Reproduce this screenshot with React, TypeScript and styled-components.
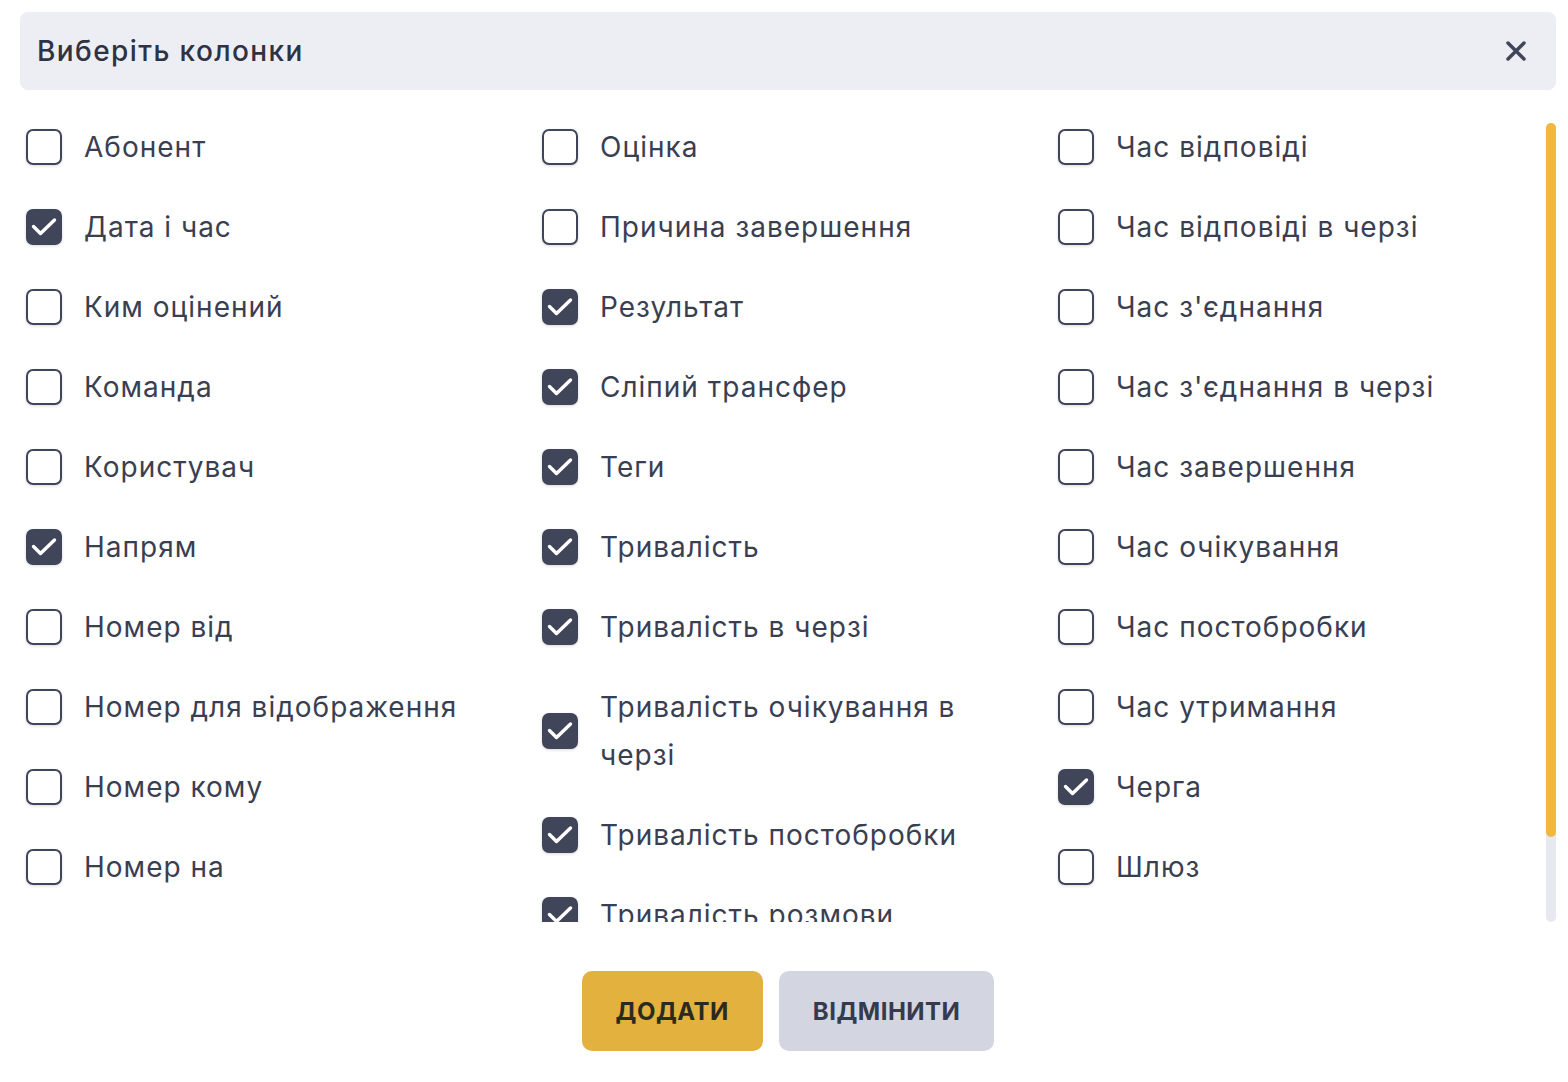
import React from 'react';
import styled, { createGlobalStyle } from 'styled-components';

const GlobalStyle = createGlobalStyle`
  html, body {
    margin: 0;
    padding: 0;
    background: #ffffff;
  }
  body {
    font-family: Inter, "Noto Sans", "Liberation Sans", sans-serif;
    color: #3a3e51;
  }
  * {
    box-sizing: border-box;
  }
`;

type Column = { label: string; checked: boolean }[];

const columns: Column[] = [
  [
    { label: 'Абонент', checked: false },
    { label: 'Дата і час', checked: true },
    { label: 'Ким оцінений', checked: false },
    { label: 'Команда', checked: false },
    { label: 'Користувач', checked: false },
    { label: 'Напрям', checked: true },
    { label: 'Номер від', checked: false },
    { label: 'Номер для відображення', checked: false },
    { label: 'Номер кому', checked: false },
    { label: 'Номер на', checked: false },
  ],
  [
    { label: 'Оцінка', checked: false },
    { label: 'Причина завершення', checked: false },
    { label: 'Результат', checked: true },
    { label: 'Сліпий трансфер', checked: true },
    { label: 'Теги', checked: true },
    { label: 'Тривалість', checked: true },
    { label: 'Тривалість в черзі', checked: true },
    { label: 'Тривалість очікування в черзі', checked: true },
    { label: 'Тривалість постобробки', checked: true },
    { label: 'Тривалість розмови', checked: true },
  ],
  [
    { label: 'Час відповіді', checked: false },
    { label: 'Час відповіді в черзі', checked: false },
    { label: "Час з'єднання", checked: false },
    { label: "Час з'єднання в черзі", checked: false },
    { label: 'Час завершення', checked: false },
    { label: 'Час очікування', checked: false },
    { label: 'Час постобробки', checked: false },
    { label: 'Час утримання', checked: false },
    { label: 'Черга', checked: true },
    { label: 'Шлюз', checked: false },
  ],
];

const Page = styled.div`
  width: 1568px;
  height: 1082px;
  padding: 12px 12px 0 20px;
  display: flex;
  flex-direction: column;
`;

const Header = styled.div`
  height: 78px;
  background: #edeef3;
  border-radius: 8px;
  display: flex;
  align-items: center;
  justify-content: space-between;
  padding: 0 28px 0 17px;
`;

const Title = styled.h2`
  margin: 0;
  font-size: 28px;
  font-weight: 500;
  color: #2f3242;
  letter-spacing: 1.4px;
`;

const CloseButton = styled.button`
  border: none;
  background: transparent;
  padding: 0;
  width: 24px;
  height: 24px;
  display: flex;
  align-items: center;
  justify-content: center;
  cursor: pointer;
`;

const Body = styled.div`
  margin-top: 17px;
  height: 815px;
  display: flex;
`;

const Viewport = styled.div`
  flex: 1;
  overflow: hidden;
  padding-left: 6px;
  display: grid;
  grid-template-columns: 516px 516px 1fr;
  align-items: start;
`;

const List = styled.ul`
  list-style: none;
  margin: 0;
  padding: 0 60px 0 0;
`;

const Item = styled.li`
  display: flex;
  align-items: center;
  gap: 22px;
  padding: 16px 0;
`;

const Box = styled.span<{ $checked: boolean }>`
  flex: 0 0 36px;
  width: 36px;
  height: 36px;
  border-radius: 7px;
  border: 2px solid #40455a;
  background: ${(p) => (p.$checked ? '#40455a' : '#ffffff')};
  box-shadow: 0 1px 3px rgba(40, 44, 60, 0.18);
  display: flex;
  align-items: center;
  justify-content: center;
`;

const Label = styled.span`
  font-size: 28px;
  line-height: 48px;
  letter-spacing: 1px;
  color: #3a3e51;
`;

const Track = styled.div`
  width: 10px;
  margin-top: 16px;
  background: #e8e9ef;
  border-radius: 5px;
  display: flex;
  flex-direction: column;
`;

const Thumb = styled.div`
  background: #f0b83f;
  border-radius: 5px;
`;

const Footer = styled.div`
  margin-top: 49px;
  display: flex;
  justify-content: center;
  gap: 16px;
`;

const ActionButton = styled.button<{ $primary?: boolean }>`
  height: 80px;
  padding: 0 34px;
  border: none;
  border-radius: 10px;
  font-family: Inter, "Noto Sans", "Liberation Sans", sans-serif;
  font-size: 24px;
  font-weight: 700;
  letter-spacing: 0.5px;
  text-transform: uppercase;
  background: ${(p) => (p.$primary ? '#e3b13d' : '#d3d5e0')};
  color: ${(p) => (p.$primary ? '#2b2a22' : '#353a4d')};
  cursor: pointer;
`;

const Check = () => (
  <svg width="28" height="20" viewBox="0 0 28 20" fill="none">
    <path
      d="M3.5 9.5 L10.5 16.5 L24.5 3"
      stroke="#ffffff"
      strokeWidth="3.4"
      strokeLinecap="round"
      strokeLinejoin="round"
    />
  </svg>
);

const App = () => {
  const thumbHeight = 714;

  return (
    <>
      <GlobalStyle />
      <Page>
        <Header>
          <Title>Виберіть колонки</Title>
          <CloseButton aria-label="close">
            <svg width="22" height="22" viewBox="0 0 22 22" fill="none">
              <path
                d="M3 3 L19 19 M19 3 L3 19"
                stroke="#40455a"
                strokeWidth="3.5"
                strokeLinecap="round"
              />
            </svg>
          </CloseButton>
        </Header>

        <Body>
          <Viewport>
            {columns.map((col, i) => (
              <List key={i}>
                {col.map((item) => (
                  <Item key={item.label}>
                    <Box $checked={item.checked}>{item.checked && <Check />}</Box>
                    <Label>{item.label}</Label>
                  </Item>
                ))}
              </List>
            ))}
          </Viewport>
          <Track>
            <Thumb style={{ height: thumbHeight }} />
          </Track>
        </Body>

        <Footer>
          <ActionButton $primary>Додати</ActionButton>
          <ActionButton>Відмінити</ActionButton>
        </Footer>
      </Page>
    </>
  );
};

export default App;
